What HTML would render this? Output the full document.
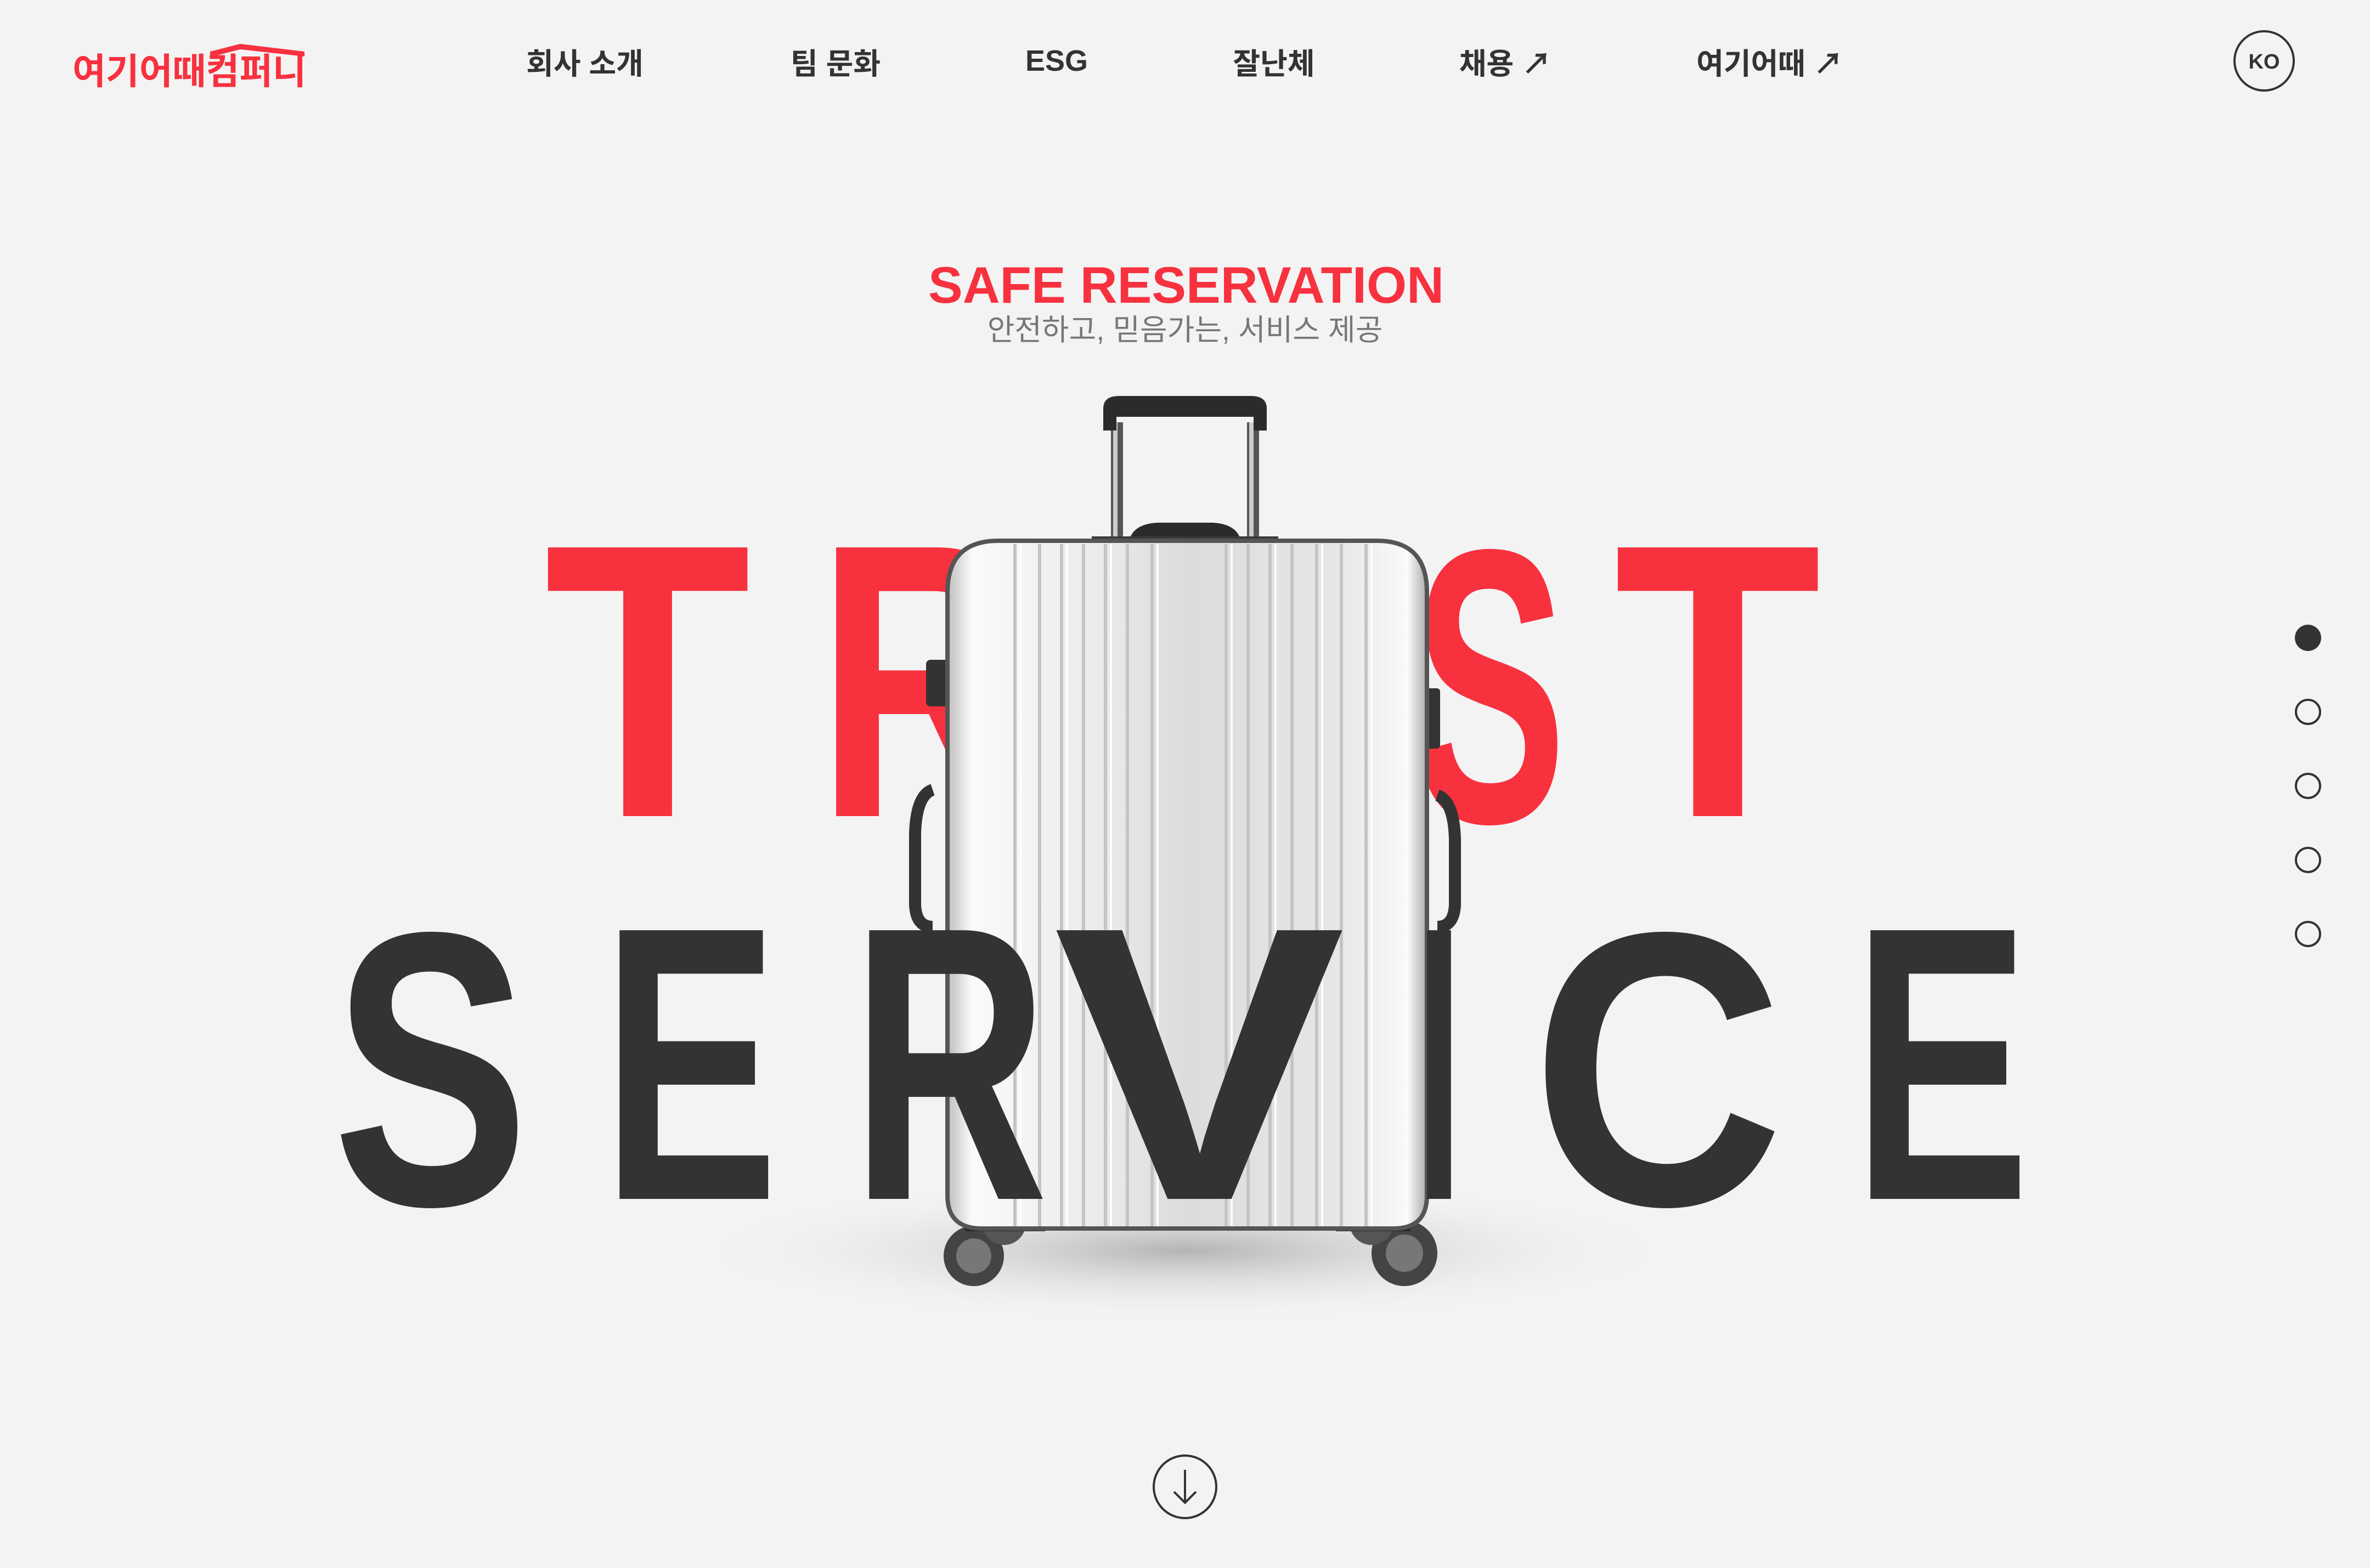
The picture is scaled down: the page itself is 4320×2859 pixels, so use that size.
<!DOCTYPE html>
<html><head><meta charset="utf-8"><style>
html,body{margin:0;padding:0;}
body{width:4320px;height:2859px;background:#f3f3f3;position:relative;overflow:hidden;font-family:"Liberation Sans","Noto Sans CJK KR",sans-serif;}
.nav{position:absolute;top:72px;font-size:54px;font-weight:700;color:#333;transform:translateX(-50%);white-space:nowrap;font-family:"Liberation Sans","Noto Sans CJK KR",sans-serif;}
svg{position:absolute;left:0;top:0;}
</style></head><body>
<svg width="4320" height="2859" viewBox="0 0 4320 2859">
<defs>
<linearGradient id="bodyg" x1="0" x2="1" y1="0" y2="0">
<stop offset="0" stop-color="#bdbdbd"/><stop offset="0.05" stop-color="#fafafa"/><stop offset="0.3" stop-color="#ececec"/><stop offset="0.5" stop-color="#dcdcdc"/><stop offset="0.8" stop-color="#e6e6e6"/><stop offset="0.96" stop-color="#fafafa"/><stop offset="1" stop-color="#aaa"/>
</linearGradient>
<radialGradient id="sh" cx="0.5" cy="0.5" r="0.5"><stop offset="0" stop-color="#999" stop-opacity="0.7"/><stop offset="1" stop-color="#f3f3f3" stop-opacity="0"/></radialGradient>
</defs>
<path d="M383 94 L438 80 L555 94 L555 103 L438 90 L383 104 Z" fill="#f8313f"/>
<text x="132" y="153" font-size="66" font-weight="700" fill="#f8313f" textLength="426" lengthAdjust="spacingAndGlyphs" font-family="Liberation Sans, Noto Sans CJK KR, sans-serif">여기어때컴퍼니</text>
<circle cx="4127" cy="111" r="54" fill="none" stroke="#333" stroke-width="4"/>
<text x="4127" y="125" font-size="38" font-weight="700" fill="#333" text-anchor="middle">KO</text>
<text x="1692" y="552" font-size="94" font-weight="700" fill="#f8313f" textLength="940" lengthAdjust="spacingAndGlyphs" font-family="Liberation Sans, sans-serif">SAFE RESERVATION</text>
<text x="2160" y="620" font-size="54" fill="#777" text-anchor="middle" font-family="Liberation Sans, Noto Sans CJK KR, sans-serif">안전하고, 믿음가는, 서비스 제공</text>
<g fill="#f8313f" font-size="712" font-weight="700" font-family="Liberation Sans, sans-serif">
<text x="992" y="1488" textLength="377" lengthAdjust="spacingAndGlyphs">T</text>
<text x="1488" y="1488" textLength="390" lengthAdjust="spacingAndGlyphs">R</text>
<text x="1950" y="1488" textLength="440" lengthAdjust="spacingAndGlyphs">U</text>
<text x="2575" y="1498" textLength="280" lengthAdjust="spacingAndGlyphs">S</text>
<text x="2942" y="1488" textLength="378" lengthAdjust="spacingAndGlyphs">T</text>
</g>
<ellipse cx="2160" cy="2280" rx="900" ry="130" fill="url(#sh)"/>
<g>
<rect x="2025" y="770" width="22" height="220" fill="#555"/><rect x="2029" y="770" width="8" height="220" fill="#ccc"/>
<rect x="2273" y="770" width="22" height="220" fill="#555"/><rect x="2277" y="770" width="8" height="220" fill="#ccc"/>
<path d="M2011 745 Q2011 722 2040 722 L2280 722 Q2309 722 2309 745 L2309 785 L2285 785 L2285 760 L2035 760 L2035 785 L2011 785 Z" fill="#2b2b2b"/>
<path d="M2060 980 Q2070 955 2110 953 L2210 953 Q2250 955 2260 980 Z" fill="#2b2b2b"/>
<rect x="1990" y="978" width="340" height="14" fill="#3a3a3a"/>
<rect x="1688" y="1203" width="48" height="85" rx="8" fill="#333"/>
<rect x="2595" y="1255" width="30" height="110" rx="6" fill="#333"/>
<path d="M1700 1440 Q1670 1450 1668 1520 L1668 1650 Q1670 1690 1700 1690" fill="none" stroke="#333" stroke-width="22"/>
<path d="M2620 1450 Q2650 1460 2652 1530 L2652 1650 Q2650 1690 2620 1690" fill="none" stroke="#333" stroke-width="22"/>
<circle cx="1775" cy="2290" r="55" fill="#444"/><circle cx="1775" cy="2290" r="32" fill="#777"/>
<circle cx="1830" cy="2230" r="40" fill="#555"/>
<circle cx="2560" cy="2285" r="60" fill="#444"/><circle cx="2560" cy="2285" r="34" fill="#777"/>
<circle cx="2500" cy="2230" r="40" fill="#555"/>
<path d="M1740 2180 L1905 2180 L1905 2245 L1760 2245 Z" fill="#2b2b2b"/>
<path d="M2435 2180 L2590 2180 L2570 2245 L2435 2245 Z" fill="#2b2b2b"/>
<path d="M1727 1080 Q1727 986 1820 986 L2510 986 Q2601 986 2601 1080 L2601 2180 Q2601 2240 2540 2240 L1790 2240 Q1727 2240 1727 2180 Z" fill="url(#bodyg)" stroke="#555" stroke-width="8"/>
<g stroke="#c4c4c4" stroke-width="6">
<line x1="1850" y1="992" x2="1850" y2="2236"/><line x1="1895" y1="992" x2="1895" y2="2236"/><line x1="1935" y1="992" x2="1935" y2="2236"/><line x1="1975" y1="992" x2="1975" y2="2236"/><line x1="2015" y1="992" x2="2015" y2="2236"/><line x1="2055" y1="992" x2="2055" y2="2236"/><line x1="2100" y1="992" x2="2100" y2="2236"/>
<line x1="2235" y1="992" x2="2235" y2="2236"/><line x1="2275" y1="992" x2="2275" y2="2236"/><line x1="2315" y1="992" x2="2315" y2="2236"/><line x1="2355" y1="992" x2="2355" y2="2236"/><line x1="2400" y1="992" x2="2400" y2="2236"/><line x1="2445" y1="992" x2="2445" y2="2236"/><line x1="2490" y1="992" x2="2490" y2="2236"/>
</g>
<g stroke="#fff" stroke-width="4" opacity="0.9">
<line x1="1860" y1="992" x2="1860" y2="2236"/><line x1="1945" y1="992" x2="1945" y2="2236"/><line x1="2025" y1="992" x2="2025" y2="2236"/><line x1="2110" y1="992" x2="2110" y2="2236"/><line x1="2245" y1="992" x2="2245" y2="2236"/><line x1="2325" y1="992" x2="2325" y2="2236"/><line x1="2410" y1="992" x2="2410" y2="2236"/><line x1="2500" y1="992" x2="2500" y2="2236"/>
</g>
</g>
<g fill="#333" font-size="712" font-weight="700" font-family="Liberation Sans, sans-serif">
<text x="606" y="2196" textLength="358" lengthAdjust="spacingAndGlyphs">S</text>
<text x="1097" y="2186" textLength="322" lengthAdjust="spacingAndGlyphs">E</text>
<text x="1551" y="2186" textLength="360" lengthAdjust="spacingAndGlyphs">R</text>
<text x="1920" y="2186" textLength="532" lengthAdjust="spacingAndGlyphs">V</text>
<text x="2581" y="2186" textLength="84" lengthAdjust="spacingAndGlyphs">I</text>
<text x="2791" y="2196" textLength="461" lengthAdjust="spacingAndGlyphs">C</text>
<text x="3377" y="2186" textLength="323" lengthAdjust="spacingAndGlyphs">E</text>
</g>
<circle cx="4207" cy="1163" r="24" fill="#333"/>
<g fill="none" stroke="#333" stroke-width="4"><circle cx="4207" cy="1298" r="22"/><circle cx="4207" cy="1433" r="22"/><circle cx="4207" cy="1568" r="22"/><circle cx="4207" cy="1703" r="22"/></g>
<circle cx="2160" cy="2711" r="57" fill="none" stroke="#333" stroke-width="4"/>
<path d="M2160 2680 L2160 2740 M2140 2720 L2160 2740 L2180 2720" fill="none" stroke="#333" stroke-width="4"/>
</svg>
<div class="nav" style="left:1066px">회사 소개</div>
<div class="nav" style="left:1523px">팀 문화</div>
<div class="nav" style="left:1926px;top:80px">ESG</div>
<div class="nav" style="left:2322px">잘난체</div>
<div class="nav" style="left:2744px">채용 ↗</div>
<div class="nav" style="left:3226px">여기어때 ↗</div>
</body></html>
